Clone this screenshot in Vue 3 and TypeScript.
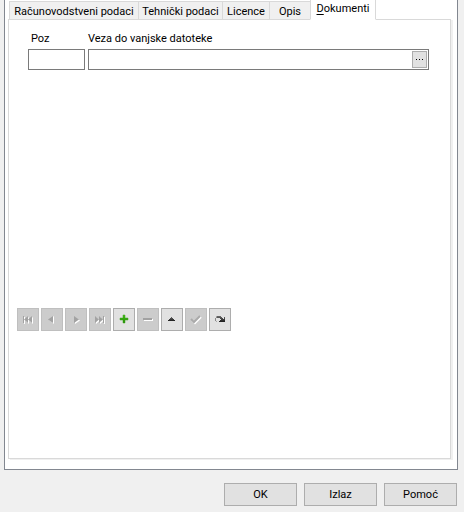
<script setup lang="ts">
import { ref } from 'vue'

interface Tab {
  id: string
  key?: string
  label: string
}

interface NavAction {
  id: string
  title: string
  disabled: boolean
}

const tabs: Tab[] = [
  { id: 'accounting', label: 'Računovodstveni podaci' },
  { id: 'technical', label: 'Tehnički podaci' },
  { id: 'licences', label: 'Licence' },
  { id: 'description', label: 'Opis' },
  { id: 'documents', key: 'D', label: 'okumenti' },
]

const actions: NavAction[] = [
  { id: 'first', title: 'Prvi', disabled: true },
  { id: 'prev', title: 'Prethodni', disabled: true },
  { id: 'next', title: 'Sljedeći', disabled: true },
  { id: 'last', title: 'Zadnji', disabled: true },
  { id: 'add', title: 'Dodaj', disabled: false },
  { id: 'remove', title: 'Obriši', disabled: true },
  { id: 'edit', title: 'Uredi', disabled: false },
  { id: 'post', title: 'Spremi', disabled: true },
  { id: 'refresh', title: 'Osvježi', disabled: false },
]

const active = ref('documents')
const position = ref('')
const link = ref('')
</script>

<template>
  <main class="dialog">
    <section class="frame">
      <div class="tabs" role="tablist">
        <button
          v-for="tab in tabs"
          :key="tab.id"
          type="button"
          role="tab"
          class="tab"
          :class="[tab.id, { active: active === tab.id }]"
          :aria-selected="active === tab.id"
          @click="active = tab.id"
        ><u v-if="tab.key">{{ tab.key }}</u>{{ tab.label }}</button>
      </div>

      <div class="page" role="tabpanel">
        <div class="record">
          <div class="field narrow">
            <label for="poz">Poz</label>
            <div class="box"><input id="poz" v-model="position" type="text" /></div>
          </div>
          <div class="field wide">
            <label for="link">Veza do vanjske datoteke</label>
            <div class="box">
              <input id="link" v-model="link" type="text" />
              <button type="button" class="browse" aria-label="Odaberi datoteku">
                <svg width="9" height="3" viewBox="0 0 9 3">
                  <path d="M1 1h1v1H1zM4 1h1v1H4zM7 1h1v1H7z" fill="#000" />
                </svg>
              </button>
            </div>
          </div>
        </div>

        <div class="navigator">
          <button
            v-for="action in actions"
            :key="action.id"
            type="button"
            class="nav"
            :aria-label="action.title"
            :disabled="action.disabled"
          >
            <svg width="12" height="13" viewBox="0 0 12 13">
              <defs>
                <linearGradient id="green" x1="0" y1="0" x2="0" y2="1">
                  <stop offset="0" stop-color="#43bd16" />
                  <stop offset="1" stop-color="#208a00" />
                </linearGradient>
                <linearGradient id="dark" x1="0" y1="0" x2="0" y2="1">
                  <stop offset="0" stop-color="#6a6a6a" />
                  <stop offset="1" stop-color="#1c1c1c" />
                </linearGradient>
              </defs>
              <template v-if="action.id === 'first'">
                <path d="M2 4h1v7H2zM7 4v7L3 7.5zM11 4v7L7 7.5z" fill="#fff" />
                <path d="M1 3h1v7H1zM6 3v7L2 6.5zM10 3v7L6 6.5z" fill="#a2a2a2" />
              </template>
              <template v-else-if="action.id === 'prev'">
                <path d="M8 3v8L3 7z" fill="#fff" />
                <path d="M7 3v7L2 6.5z" fill="#a2a2a2" />
              </template>
              <template v-else-if="action.id === 'next'">
                <path d="M5 4v7l5-3.5z" fill="#fff" />
                <path d="M4 3v7l5-3.5z" fill="#a2a2a2" />
              </template>
              <template v-else-if="action.id === 'last'">
                <path d="M2 4v7l4-3.5zM6 4v7l4-3.5zM10 4h1v7h-1z" fill="#fff" />
                <path d="M1 3v7l4-3.5zM5 3v7l4-3.5zM9 3h1v7H9z" fill="#a2a2a2" />
              </template>
              <path
                v-else-if="action.id === 'add'"
                d="M5 2h2v3h3v2H7v3H5V7H2V5h3z"
                fill="url(#green)"
                stroke="#43a520"
                stroke-width="0.5"
              />
              <template v-else-if="action.id === 'remove'">
                <path d="M2 6h9v2H2z" fill="#fff" />
                <path d="M1 5h9v2H1z" fill="#a2a2a2" />
              </template>
              <path
                v-else-if="action.id === 'edit'"
                d="M5 4h1v1h1v1h1v1h1v1H2V7h1V6h1V5h1z"
                fill="url(#dark)"
              />
              <template v-else-if="action.id === 'post'">
                <path d="M2 7l3 3 6-6" fill="none" stroke="#fff" stroke-width="2" />
                <path d="M1 6l3 3 6-6" fill="none" stroke="#aaa" stroke-width="2" />
              </template>
              <template v-else>
                <path d="M1 5h1v3H1zM2 4h1v1H2z" fill="#888" />
                <path d="M2 8h1v1H2z" fill="#aaa" />
                <path d="M3 3h4v1h1v1h1v1h1V4h1v5H5V8h1V7h1V6H6V5H3V4H2z" fill="url(#dark)" />
              </template>
            </svg>
          </button>
        </div>
      </div>
    </section>

    <footer class="buttons">
      <button type="button">OK</button>
      <button type="button">Izlaz</button>
      <button type="button">Pomoć</button>
    </footer>
  </main>
</template>

<style>
body {
  background: #f0f0f0;
}
</style>

<style scoped>
.dialog {
  box-sizing: border-box;
  display: flex;
  flex-direction: column;
  min-height: 100vh;
  padding: 0 6px 6px 4px;
  color: #000;
  font-family: Tahoma, Roboto, "Noto Sans", sans-serif;
  font-size: 11px;
  line-height: 14px;
}

button,
input {
  box-sizing: border-box;
  margin: 0;
  padding: 0;
  border: 0;
  color: inherit;
  font: inherit;
}

svg {
  display: block;
}

.frame {
  flex: 1;
  display: flex;
  flex-direction: column;
  padding: 0 5px 10px 3px;
  border: 1px solid #828790;
  border-top: 0;
  background: #fff;
}

.tabs {
  position: relative;
  z-index: 1;
  display: flex;
  align-items: flex-end;
  height: 20px;
  padding-left: 1px;
}

.tab {
  min-width: 0;
  height: 19px;
  padding-top: 2px;
  border: 1px solid #d9d9d9;
  border-right: 0;
  background: #f0f0f0;
  white-space: nowrap;
}

.tab.accounting {
  flex: 0 0 129px;
}

.tab.technical {
  flex: 0 0 84px;
}

.tab.licences {
  flex: 0 0 47px;
}

.tab.description {
  flex: 0 0 41px;
}

.tab.documents {
  flex: 0 0 66px;
  border-right: 1px solid #d9d9d9;
}

.tab.active {
  height: 20px;
  padding: 0 0 1px;
  border-top: 0;
  border-bottom-color: #fff;
  background: #fff;
}

.tab u {
  text-underline-offset: 2px;
}

.page {
  flex: 1;
  display: flex;
  flex-direction: column;
  margin-top: -1px;
  margin-right: 1px;
  padding: 12px 21px 127px 8px;
  border: 1px solid #d9d9d9;
  box-shadow: 2px 1px 0 #f0f0f0;
}

.record {
  flex: 1;
  display: flex;
  gap: 3px;
  padding-left: 11px;
}

.field {
  display: flex;
  flex-direction: column;
  gap: 3px;
  min-width: 0;
}

.narrow {
  flex: 0 0 57px;
}

.narrow label {
  padding-left: 3px;
}

.wide {
  flex: 1;
}

.box {
  box-sizing: border-box;
  display: flex;
  height: 21px;
  padding: 1px;
  border: 1px solid #7a7a7a;
  background: #fff;
}

.box input {
  flex: 1;
  min-width: 0;
  padding: 0 2px;
  outline: 0;
  background: transparent;
}

.browse {
  display: flex;
  align-items: center;
  justify-content: center;
  width: 15px;
  border: 1px solid #adadad;
  background: #e1e1e1;
}

.navigator {
  display: flex;
  gap: 2px;
}

.nav {
  display: flex;
  align-items: center;
  justify-content: center;
  width: 22px;
  height: 23px;
  border: 1px solid #adadad;
  background: #e1e1e1;
}

.nav:disabled {
  border-color: #bfbfbf;
  background: #ccc;
}

.buttons {
  display: flex;
  justify-content: flex-end;
  gap: 7px;
  padding: 13px 1px 0 0;
}

.buttons button {
  width: 73px;
  height: 23px;
  border: 1px solid #adadad;
  background: #e1e1e1;
}
</style>
